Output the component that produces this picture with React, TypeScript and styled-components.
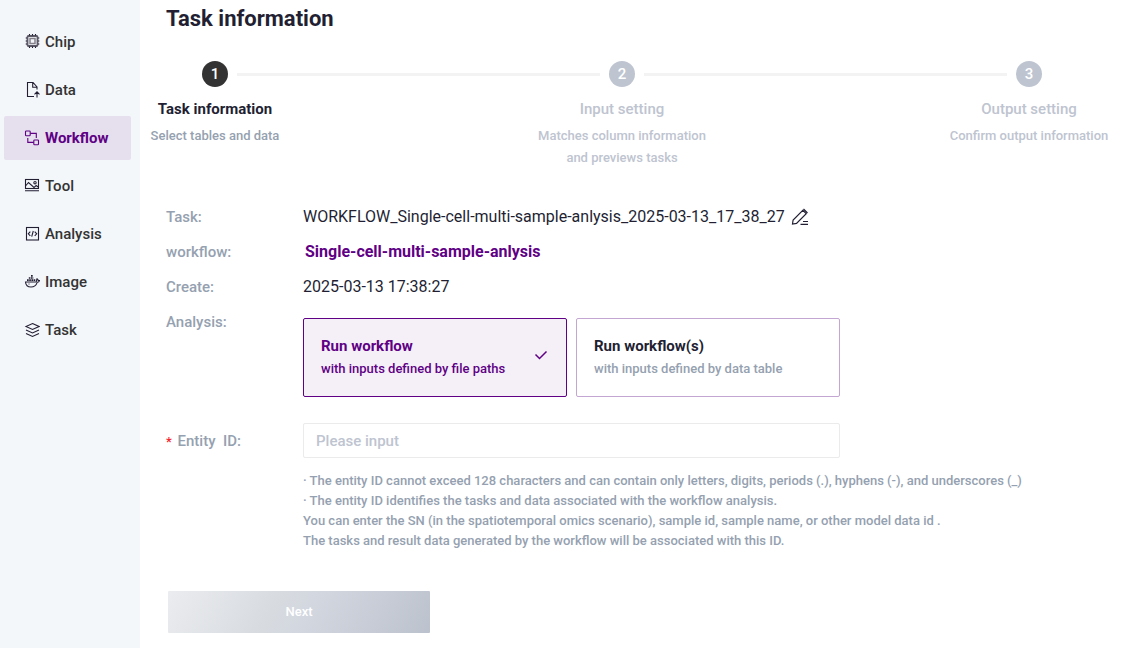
import React, { useState } from 'react';
import styled, { createGlobalStyle, css } from 'styled-components';

const color = {
  ink: '#231f33',
  purple: '#5f0085',
  muted: '#95a1b0',
  faint: '#bec4d0',
  line: '#f3f3f3',
};

const GlobalStyle = createGlobalStyle`
  *, *::before, *::after { box-sizing: border-box; }
  body {
    margin: 0;
    background: #fff;
    color: ${color.ink};
    font-family: Roboto, "Liberation Sans", sans-serif;
    font-size: 15px;
    font-weight: 500;
    line-height: 20px;
  }
  button, input { font: inherit; }
`;

const Page = styled.div`
  display: flex;
  min-height: 100vh;
`;

const Sidebar = styled.nav`
  flex: 0 0 140px;
  display: flex;
  flex-direction: column;
  gap: 4px;
  padding: 20px 9px 20px 4px;
  background: #f3f7fa;
`;

const NavLink = styled.a<{ $active?: boolean }>`
  display: flex;
  align-items: center;
  gap: 5px;
  height: 44px;
  padding-left: 20px;
  border-radius: 2px;
  color: #333;
  text-decoration: none;
  ${(p) => p.$active && css`
    background: #e6dfed;
    color: ${color.purple};
    font-weight: 700;
  `}
`;

const NavIcon = styled.svg<{ $active?: boolean }>`
  flex: none;
  width: 16px;
  height: 16px;
  fill: none;
  stroke: ${(p) => (p.$active ? color.purple : color.ink)};
  stroke-width: 1.1;
`;

const Main = styled.main`
  flex: 1;
  min-width: 0;
  padding: 5px 63px 15px 26px;
`;

const Title = styled.h1`
  margin: 0;
  font-size: 22px;
  line-height: 28px;
  font-weight: 700;
`;

const Steps = styled.ol`
  display: flex;
  justify-content: space-between;
  align-items: flex-start;
  gap: 8px;
  margin: 28px 0 0;
  padding: 0;
  list-style: none;
`;

const Step = styled.li<{ $current?: boolean }>`
  flex: none;
  display: flex;
  flex-direction: column;
  align-items: center;
  width: 98px;
  color: ${(p) => (p.$current ? color.ink : color.faint)};
  text-align: center;
  white-space: nowrap;
`;

const StepNumber = styled.span<{ $current?: boolean }>`
  width: 26px;
  height: 26px;
  border-radius: 50%;
  background: ${(p) => (p.$current ? '#333' : color.faint)};
  color: #fff;
  line-height: 27px;
`;

const StepName = styled.span<{ $current?: boolean }>`
  margin-top: 12px;
  font-weight: ${(p) => (p.$current ? 700 : 500)};
`;

const StepNote = styled.span<{ $current?: boolean }>`
  margin-top: 6px;
  color: ${(p) => (p.$current ? color.muted : color.faint)};
  font-size: 13px;
  line-height: 22px;
`;

const StepLine = styled.li`
  flex: 1;
  height: 3px;
  margin: 12px -35px 0;
  background: ${color.line};
`;

const Form = styled.form`
  display: flex;
  flex-direction: column;
  margin-top: 38px;
`;

const Row = styled.div<{ $space?: number }>`
  display: flex;
  align-items: flex-start;
  margin-bottom: ${(p) => p.$space ?? 15}px;
`;

const labelStyle = css`
  flex: 0 0 137px;
  color: ${color.muted};
`;

const Term = styled.span`
  ${labelStyle}
`;

const EntityLabel = styled.label`
  ${labelStyle}
  padding-top: 8px;
  white-space: pre;
`;

const Required = styled.span`
  margin-right: 2px;
  color: #f5222d;
  font-size: 13px;
`;

const Value = styled.span`
  display: flex;
  align-items: center;
  gap: 6px;
  font-size: 16px;
  font-weight: 400;
`;

const WorkflowLink = styled.a`
  padding-left: 2px;
  color: ${color.purple};
  font-size: 16px;
  font-weight: 700;
  text-decoration: none;
`;

const EditButton = styled.button`
  display: flex;
  padding: 0;
  border: 0;
  background: none;
  color: ${color.ink};
`;

const Choices = styled.div`
  flex: 0 1 537px;
  display: grid;
  grid-template-columns: 1fr 1fr;
  gap: 9px;
  margin-top: 6px;
`;

const Choice = styled.button<{ $on: boolean }>`
  display: flex;
  align-items: center;
  justify-content: space-between;
  height: 79px;
  padding: 0 18px 0 17px;
  border: 1px solid ${(p) => (p.$on ? color.purple : '#c3a6d2')};
  border-radius: 2px;
  background: ${(p) => (p.$on ? '#f5f0f8' : '#fff')};
  color: ${(p) => (p.$on ? color.purple : color.ink)};
  text-align: left;
`;

const ChoiceName = styled.span`
  display: block;
  font-weight: 700;
  line-height: 22px;
`;

const ChoiceNote = styled.span<{ $on: boolean }>`
  display: block;
  color: ${(p) => (p.$on ? color.purple : color.muted)};
  font-size: 13px;
  line-height: 24px;
`;

const CheckMark = styled.svg`
  flex: none;
  width: 14px;
  height: 20px;
  fill: none;
  stroke: currentColor;
  stroke-width: 1.5;
`;

const Field = styled.div`
  flex: 1;
  min-width: 0;
`;

const TextBox = styled.input`
  display: block;
  width: 100%;
  max-width: 537px;
  height: 35px;
  padding: 0 12px;
  border: 1px solid #ebebeb;
  border-radius: 2px;
  color: ${color.ink};
  outline: none;
  &::placeholder { color: ${color.faint}; opacity: 1; }
`;

const Hint = styled.p`
  margin: 13px 0 0;
  color: ${color.muted};
  font-size: 13px;
  line-height: 20px;
`;

const NextButton = styled.button`
  width: 262px;
  height: 42px;
  margin: 40px 0 0 2px;
  border: 0;
  border-radius: 1px;
  background: linear-gradient(120deg, #ebecf0 0%, #d8dce0 38%, #d2d6df 55%, #bcc2cd 100%);
  color: #fff;
  font-size: 13px;
`;

const icons: Record<string, React.ReactNode> = {
  Chip: (
    <>
      <rect x="3.500" y="2" width="10" height="10" rx="1" strokeWidth="1.800" stroke="#5d5a67" />
      <rect x="6" y="4.500" width="5" height="5" strokeWidth="1.500" stroke="#85828c" />
      <path d="M5.500 0v1.500M8.500 0v1.500M11.500 0v1.500M5.500 12.500V14M8.500 12.500V14M11.500 12.500V14M1.700 4H3M1.700 7H3M1.700 10H3M14 4h1.300M14 7h1.300M14 10h1.300" />
    </>
  ),
  Data: (
    <path d="M10 14.500H3.500V.5h5.500l4 4.500v2.500M8.700 .8v4.400h4M13 15.500V10M10.500 12.300L13 9.800l2.500 2.500" />
  ),
  Workflow: (
    <>
      <rect x="1.500" y="1" width="4.700" height="4.700" rx="0.800" />
      <rect x="9.800" y="10" width="4.700" height="4.700" rx="0.800" />
      <path d="M6.200 3.400h6.100V8M9.800 12.400H3.800V8" />
    </>
  ),
  Tool: (
    <>
      <rect x="1.500" y="1.500" width="13" height="9" />
      <path d="M1.500 8l3-3.500 5.500 5 2.200-2 2.300 1.800M1 12.800h14" />
      <circle cx="11" cy="4.700" r="1.200" />
    </>
  ),
  Analysis: (
    <>
      <rect x="2.500" y="1.500" width="12" height="12.500" />
      <path d="M6.300 5.700L4.300 7.800l2 2.100M10.700 5.700l2 2.100-2 2.100M9.300 5L7.700 10.600" />
    </>
  ),
  Image: (
    <>
      <path d="M1.500 8h10.300c1 0 .6-2.400 1.200-3.300.9.500 1.200 1.300 1.200 1.800h1.300c-.3 1.300-1.300 1.700-2.300 1.800-1 3-3 4.700-6.200 4.700C3.500 13 1.700 11 1.500 8z" />
      <path d="M3 6.200h8.500M4.800 4H9.500M7 1.800h2" strokeWidth="1.700" strokeDasharray="1.700 .5" />
      <path d="M4.500 10h1" />
    </>
  ),
  Task: (
    <path d="M8.500 1.500l6.500 3-6.500 3-6.500-3zM2 8l6.500 3L15 8M2 11.500l6.500 3 6.500-3" />
  ),
};

const steps = [
  { name: 'Task information', note: ['Select tables and data'] },
  { name: 'Input setting', note: ['Matches column information', 'and previews tasks'] },
  { name: 'Output setting', note: ['Confirm output information'] },
];

const choices = [
  { name: 'Run workflow', note: 'with inputs defined by file paths' },
  { name: 'Run workflow(s)', note: 'with inputs defined by data table' },
];

const lines = (parts: string[]) =>
  parts.map((part, i) => (
    <React.Fragment key={part}>
      {i > 0 && <br />}
      {part}
    </React.Fragment>
  ));

export default function App() {
  const [chosen, setChosen] = useState(0);
  return (
    <>
      <GlobalStyle />
      <Page>
        <Sidebar aria-label="Main">
          {Object.keys(icons).map((name) => {
            const active = name === 'Workflow';
            return (
              <NavLink key={name} href="#" $active={active} aria-current={active ? 'page' : undefined}>
                <NavIcon viewBox="0 0 16 16" $active={active} aria-hidden="true">{icons[name]}</NavIcon>
                {name}
              </NavLink>
            );
          })}
        </Sidebar>
        <Main>
          <Title>Task information</Title>
          <Steps>
            {steps.map((step, i) => (
              <React.Fragment key={step.name}>
                {i > 0 && <StepLine aria-hidden="true" />}
                <Step $current={i === 0}>
                  <StepNumber $current={i === 0}>{i + 1}</StepNumber>
                  <StepName $current={i === 0}>{step.name}</StepName>
                  <StepNote $current={i === 0}>{lines(step.note)}</StepNote>
                </Step>
              </React.Fragment>
            ))}
          </Steps>
          <Form onSubmit={(e) => e.preventDefault()}>
            <Row>
              <Term>Task:</Term>
              <Value>
                WORKFLOW_Single-cell-multi-sample-anlysis_2025-03-13_17_38_27
                <EditButton type="button" aria-label="Edit task name">
                  <svg width="18" height="18" viewBox="0 0 18 18" fill="none" stroke="currentColor" strokeWidth="1.200" aria-hidden="true">
                    <path d="M1.500 16l.6-4L11.800 2.300l3.400 3.400L5.500 15.400zM12.500 1l4 4M9.500 16.400H17M12 13.500h5" />
                  </svg>
                </EditButton>
              </Value>
            </Row>
            <Row>
              <Term>workflow:</Term>
              <WorkflowLink href="#">Single-cell-multi-sample-anlysis</WorkflowLink>
            </Row>
            <Row>
              <Term>Create:</Term>
              <Value>2025-03-13 17:38:27</Value>
            </Row>
            <Row $space={26}>
              <Term>Analysis:</Term>
              <Choices>
                {choices.map((choice, i) => (
                  <Choice key={choice.name} type="button" $on={i === chosen} aria-pressed={i === chosen} onClick={() => setChosen(i)}>
                    <span>
                      <ChoiceName>{choice.name}</ChoiceName>
                      <ChoiceNote $on={i === chosen}>{choice.note}</ChoiceNote>
                    </span>
                    {i === chosen && (
                      <CheckMark viewBox="0 0 14 20" aria-hidden="true">
                        <path d="M1.500 6.500l4 4 7-7" />
                      </CheckMark>
                    )}
                  </Choice>
                ))}
              </Choices>
            </Row>
            <Row $space={0}>
              <EntityLabel htmlFor="entity"><Required>*</Required> Entity  ID:</EntityLabel>
              <Field>
                <TextBox id="entity" placeholder="Please input" />
                <Hint>
                  {lines([
                    '· The entity ID cannot exceed 128 characters and can contain only letters, digits, periods (.), hyphens (-), and underscores (_)',
                    '· The entity ID identifies the tasks and data associated with the workflow analysis.',
                    'You can enter the SN (in the spatiotemporal omics scenario), sample id, sample name, or other model data id .',
                    'The tasks and result data generated by the workflow will be associated with this ID.',
                  ])}
                </Hint>
              </Field>
            </Row>
            <NextButton type="submit" disabled>Next</NextButton>
          </Form>
        </Main>
      </Page>
    </>
  );
}
